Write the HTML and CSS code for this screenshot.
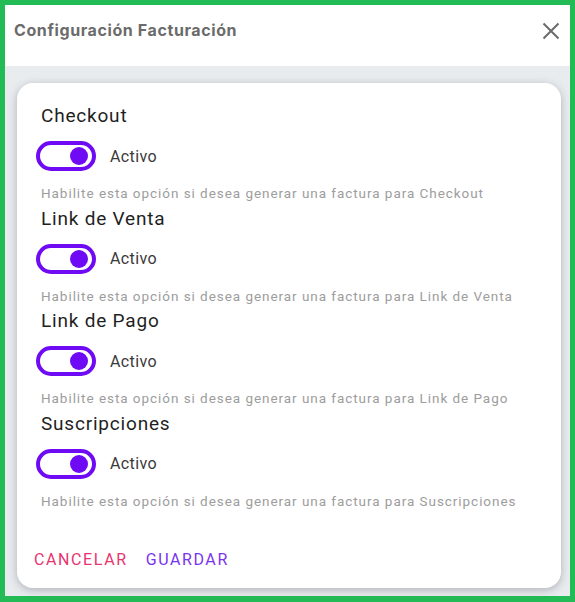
FILE: index.html
```html
<!DOCTYPE html>
<html lang="es">
<head>
<meta charset="utf-8">
<title>Configuración Facturación</title>
<link rel="stylesheet" href="styles.css">
</head>
<body>
<div class="frame">
  <header class="header">
    <h1 class="title">Configuración Facturación</h1>
    <button class="close" aria-label="Cerrar">
      <svg width="18" height="18" viewBox="0 0 18 18"><path d="M1.5 1.5L16.5 16.5M16.5 1.5L1.5 16.5" stroke="#6b6b6b" stroke-width="2" fill="none"/></svg>
    </button>
  </header>
  <main class="body">
    <section class="card">
      <div class="option">
        <h2 class="opt-title">Checkout</h2>
        <label class="switch-row"><span class="switch"><span class="knob"></span></span><span class="state">Activo</span></label>
        <p class="hint">Habilite esta opción si desea generar una factura para Checkout</p>
      </div>
      <div class="option">
        <h2 class="opt-title">Link de Venta</h2>
        <label class="switch-row"><span class="switch"><span class="knob"></span></span><span class="state">Activo</span></label>
        <p class="hint">Habilite esta opción si desea generar una factura para Link de Venta</p>
      </div>
      <div class="option">
        <h2 class="opt-title">Link de Pago</h2>
        <label class="switch-row"><span class="switch"><span class="knob"></span></span><span class="state">Activo</span></label>
        <p class="hint">Habilite esta opción si desea generar una factura para Link de Pago</p>
      </div>
      <div class="option">
        <h2 class="opt-title">Suscripciones</h2>
        <label class="switch-row"><span class="switch"><span class="knob"></span></span><span class="state">Activo</span></label>
        <p class="hint">Habilite esta opción si desea generar una factura para Suscripciones</p>
      </div>
      <div class="actions">
        <button class="btn btn-cancel">CANCELAR</button>
        <button class="btn btn-save">GUARDAR</button>
      </div>
    </section>
  </main>
</div>
</body>
</html>
```

FILE: styles.css
```css
* { box-sizing: border-box; }
html, body { margin: 0; padding: 0; }
body {
  width: 575px;
  height: 602px;
  background: #22bb55;
  font-family: Roboto, "Liberation Sans", sans-serif;
}
.frame {
  margin: 5px 5px 0 5px;
  height: 591px;
  background: #e9ecef;
  display: flex;
  flex-direction: column;
}
.header {
  height: 61px;
  background: #ffffff;
  display: flex;
  align-items: flex-start;
  justify-content: space-between;
  padding: 16px 9px 0 9px;
}
.title {
  margin: 0;
  font-family: Inter, Roboto, sans-serif;
  font-size: 16px;
  font-weight: 700;
  color: #6b6b6b;
  letter-spacing: 0.6px;
  line-height: 18px;
}
.close {
  border: 0;
  background: none;
  padding: 0;
  margin-top: 1px;
  margin-right: 1px;
  width: 18px;
  height: 18px;
  display: flex;
}
.body {
  flex: 1;
  padding: 17px 9px 8px 12px;
  display: flex;
}
.card {
  flex: 1;
  background: #ffffff;
  border-radius: 16px;
  box-shadow: 0 2px 8px rgba(60, 70, 80, 0.35);
  padding: 21px 24px 0 24px;
  display: flex;
  flex-direction: column;
}
.option {
  display: flex;
  flex-direction: column;
  height: 102.5px;
}
.opt-title {
  margin: 0;
  font-size: 19px;
  font-weight: 400;
  color: #1f1f1f;
  letter-spacing: 0.8px;
  line-height: 24px;
}
.switch-row {
  display: flex;
  align-items: center;
  gap: 14px;
  margin-top: 13px;
  margin-left: -5px;
}
.switch {
  width: 60px;
  height: 30px;
  border: 4px solid #6f0af5;
  border-radius: 15px;
  display: flex;
  align-items: center;
  justify-content: flex-end;
  padding-right: 4px;
}
.knob {
  width: 18px;
  height: 18px;
  border-radius: 50%;
  background: #6f0af5;
}
.state {
  font-size: 16px;
  color: #3a3a3a;
  letter-spacing: 0.4px;
}
.hint {
  margin: 14px 0 0 0;
  font-size: 13.5px;
  color: #9d9d9d;
  letter-spacing: 0.95px;
  line-height: 16px;
}
.actions {
  display: flex;
  gap: 18px;
  margin-top: 36px;
  margin-left: -7px;
}
.btn {
  border: 0;
  background: none;
  padding: 0;
  font-family: Roboto, sans-serif;
  font-size: 16px;
  letter-spacing: 1.6px;
  line-height: 20px;
}
.btn-cancel { color: #e8356f; }
.btn-save { color: #7a33f0; }
```
